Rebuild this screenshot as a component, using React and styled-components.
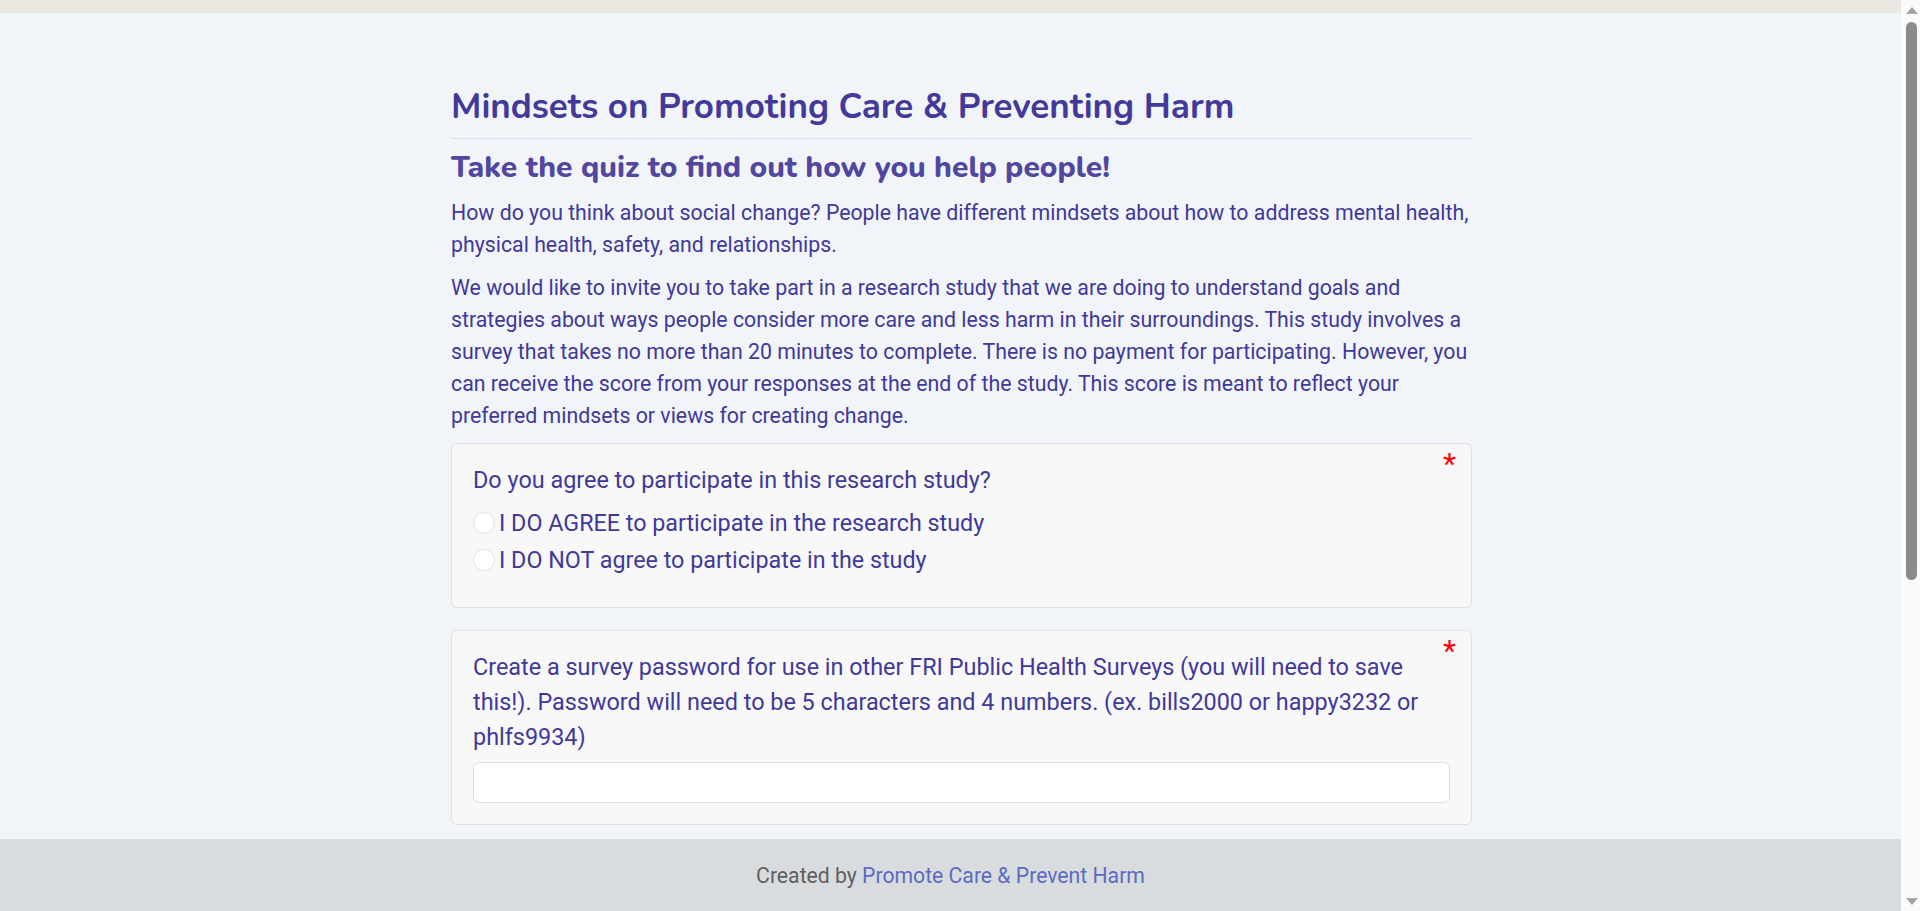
import React from 'react';
import styled, { createGlobalStyle } from 'styled-components';

const colors = {
  page: '#f1f5f9',
  topbar: '#ece7e0',
  title: '#43399a',
  subtitle: '#51479f',
  text: '#40389a',
  card: '#f8f8f9',
  cardBorder: '#dfe1e5',
  footer: '#d9dcdf',
  footerText: '#5f5f5f',
  link: '#5c6bc0',
  required: '#ff0000',
};

const GlobalStyle = createGlobalStyle`
  html, body {
    margin: 0;
    padding: 0;
    background: ${colors.page};
  }
  body {
    font-family: Roboto, "Liberation Sans", sans-serif;
    color: ${colors.text};
  }
  * { box-sizing: border-box; }
`;

const App = () => {
  return <PageWrapper>
    <GlobalStyle />
    <TopBar />
    <PageBody>
      <Main>
        <Title>Mindsets on Promoting Care &amp; Preventing Harm</Title>
        <Subtitle>Take the quiz to find out how you help people!</Subtitle>
        <Intro>How do you think about social change? People have different mindsets about how to address mental health, physical health, safety, and relationships.</Intro>
        <Intro>We would like to invite you to take part in a research study that we are doing to understand goals and strategies about ways people consider more care and less harm in their surroundings. This study involves a survey that takes no more than 20 minutes to complete. There is no payment for participating. However, you can receive the score from your responses at the end of the study. This score is meant to reflect your preferred mindsets or views for creating change.</Intro>

        <QuestionCard>
          <Required>*</Required>
          <Question>Do you agree to participate in this research study?</Question>
          <Options>
            <Option><Radio type="radio" name="consent" />I DO AGREE to participate in the research study</Option>
            <Option><Radio type="radio" name="consent" />I DO NOT agree to participate in the study</Option>
          </Options>
        </QuestionCard>

        <QuestionCard>
          <Required>*</Required>
          <Question>Create a survey password for use in other FRI Public Health Surveys (you will need to save this!). Password will need to be 5 characters and 4 numbers. (ex. bills2000 or happy3232 or phlfs9934)</Question>
          <TextInput type="text" />
        </QuestionCard>

        <QuestionCard>
          <Required>*</Required>
          <Question>What is your age?</Question>
          <TextInput type="text" />
        </QuestionCard>

        <NextButton>Next</NextButton>
      </Main>
    </PageBody>
    <Footer>
      <span>Created by <FooterLink href="#">Promote Care &amp; Prevent Harm</FooterLink></span>
    </Footer>
    <ScrollTrack aria-hidden="true">
      <ArrowUp />
      <Thumb />
      <ArrowDown />
    </ScrollTrack>
  </PageWrapper>;
};

export default App;

const PageWrapper = styled.div`
  min-height: 1432px;
  padding-right: 19px;
  background: ${colors.page};
`
const TopBar = styled.div`
  height: 13px;
  background: ${colors.topbar};
`
const PageBody = styled.div`
  display: flex;
  justify-content: center;
  padding-left: 22px;
`
const Main = styled.main`
  width: 1021px;
  padding-top: 73px;
  padding-bottom: 110px;
  display: flex;
  flex-direction: column;
`
const Title = styled.h1`
  margin: 0;
  padding-bottom: 11px;
  border-bottom: 1px solid #dde0ef;
  font-family: Nunito, "Noto Sans", sans-serif;
  font-size: 35px;
  line-height: 41px;
  font-weight: 700;
  color: ${colors.title};
`
const Subtitle = styled.h2`
  margin: 10px 0 0;
  font-family: Nunito, "Noto Sans", sans-serif;
  font-size: 30px;
  line-height: 38px;
  font-weight: 800;
  color: ${colors.subtitle};
`
const Intro = styled.p`
  margin: 10px 0 0;
  & + & { margin-top: 11px; }
  font-size: 21.3px;
  line-height: 32px;
  color: ${colors.text};
`
const QuestionCard = styled.section`
  position: relative;
  margin-top: 22px;
  ${Intro} + & { margin-top: 11px; }
  padding: 19px 21px 21px;
  background: ${colors.card};
  border: 1px solid ${colors.cardBorder};
  border-radius: 6px;
`
const Required = styled.span`
  position: absolute;
  top: 5px;
  right: 15px;
  font-size: 30px;
  line-height: 1;
  color: ${colors.required};
`
const Question = styled.div`
  font-size: 23.4px;
  line-height: 35px;
  margin-bottom: 7px;
`
const Options = styled.div`
  display: flex;
  flex-direction: column;
  margin-bottom: 8px;
`
const Option = styled.label`
  display: flex;
  align-items: center;
  height: 36.6px;
  font-size: 23.3px;
  color: ${colors.text};
  cursor: pointer;
`
const Radio = styled.input`
  appearance: none;
  width: 22px;
  height: 22px;
  margin: 0 4px 0 0;
  border-radius: 50%;
  background: #fff;
  border: 1px solid #e1e1ee;
  flex-shrink: 0;
`
const TextInput = styled.input`
  display: block;
  width: 100%;
  height: 41px;
  margin-top: 2px;
  padding: 0 12px;
  background: #fff;
  border: 1px solid #dcdbe9;
  border-radius: 6px;
  font-size: 20px;
  font-family: Roboto, sans-serif;
  color: ${colors.text};
`
const NextButton = styled.button`
  align-self: flex-end;
  margin-top: 22px;
  padding: 10px 28px;
  border: none;
  border-radius: 6px;
  background: ${colors.title};
  color: #fff;
  font-size: 20px;
  font-family: Roboto, sans-serif;
`
const Footer = styled.footer`
  position: fixed;
  left: 0;
  right: 19px;
  bottom: 0;
  height: 72px;
  display: flex;
  align-items: center;
  justify-content: center;
  background: ${colors.footer};
  font-size: 21.2px;
  color: ${colors.footerText};
`
const FooterLink = styled.a`
  color: ${colors.link};
  text-decoration: none;
`
const ScrollTrack = styled.div`
  position: fixed;
  top: 0;
  right: 0;
  width: 19px;
  height: 100vh;
  padding: 7px 0 6px;
  display: flex;
  flex-direction: column;
  align-items: center;
  background: #fafafa;
`
const ArrowUp = styled.div`
  width: 0;
  height: 0;
  margin-left: 2px;
  border-left: 6px solid transparent;
  border-right: 6px solid transparent;
  border-bottom: 7px solid #a3a3a3;
`
const Thumb = styled.div`
  width: 11px;
  height: 558px;
  margin: 8px 0 0 2px;
  border-radius: 6px;
  background: #8b8b8b;
`
const ArrowDown = styled.div`
  width: 0;
  height: 0;
  margin: auto 0 0 2px;
  border-left: 6px solid transparent;
  border-right: 6px solid transparent;
  border-top: 7px solid #a3a3a3;
`
